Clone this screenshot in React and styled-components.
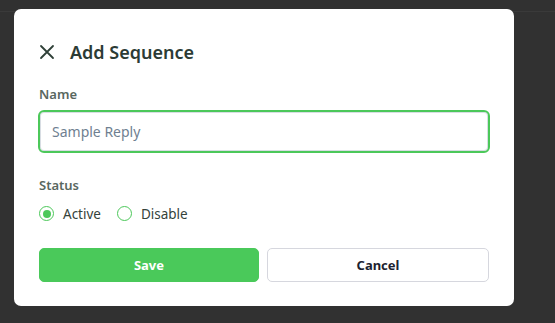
import React, { useState } from 'react'
import styled, { createGlobalStyle } from 'styled-components'

const GlobalStyle = createGlobalStyle`
    html, body {
        margin: 0;
        padding: 0;
        background: #313131;
        font-family: 'Noto Sans', 'Open Sans', sans-serif;
    }
`

export default function App() {
    const [status, setStatus] = useState('active')
    const [name, setName] = useState('')

    return (
        <>
            <GlobalStyle />
            <Overlay>
                <TopLine />
                <Modal>
                    <Header>
                        <CloseBtn aria-label="close">
                            <svg width="16" height="16" viewBox="0 0 16 16" fill="none">
                                <path d="M2 2L14 14M14 2L2 14" stroke="#2f4038" strokeWidth="1.8" strokeLinecap="round" />
                            </svg>
                        </CloseBtn>
                        <Title>Add Sequence</Title>
                    </Header>
                    <Field gap="7px" top="20px">
                        <Label>Name</Label>
                        <Input
                            autoFocus
                            placeholder="Sample Reply"
                            value={name}
                            onChange={e => setName(e.target.value)}
                        />
                    </Field>
                    <Field gap="10px" top="23px">
                        <Label>Status</Label>
                        <RadioRow>
                            <RadioItem onClick={() => setStatus('active')}>
                                <RadioCircle checked={status === 'active'} />
                                <span>Active</span>
                            </RadioItem>
                            <RadioItem onClick={() => setStatus('disable')}>
                                <RadioCircle checked={status === 'disable'} />
                                <span>Disable</span>
                            </RadioItem>
                        </RadioRow>
                    </Field>
                    <Footer>
                        <Button variant="primary">Save</Button>
                        <Button variant="default">Cancel</Button>
                    </Footer>
                </Modal>
            </Overlay>
        </>
    )
}

const Overlay = styled.div`
    position: relative;
    width: 555px;
    height: 323px;
    padding: 9px 0 0 14px;
    box-sizing: border-box;
    background: #313131;
`
const TopLine = styled.div`
    position: absolute;
    left: 0;
    right: 0;
    top: 11px;
    height: 1px;
    background: #3a3a3a;
`
const Modal = styled.div`
    position: relative;
    width: 500px;
    height: 297px;
    box-sizing: border-box;
    background: #fff;
    border-radius: 7px;
    padding: 30px 25px 0 25px;
    display: flex;
    flex-direction: column;
`
const Header = styled.div`
    display: flex;
    align-items: center;
    gap: 15px;
    height: 26px;
`
const CloseBtn = styled.button`
    border: none;
    background: none;
    padding: 0;
    width: 16px;
    height: 16px;
    display: flex;
    cursor: pointer;
`
const Title = styled.h2`
    margin: 0;
    font-size: 18px;
    font-weight: 600;
    color: #2c3b35;
`
const Field = styled.div`
    display: flex;
    flex-direction: column;
    gap: ${p => p.gap || '9px'};
    margin-top: ${p => p.top || '16px'};
`
const Label = styled.label`
    font-size: 13px;
    font-weight: 600;
    color: #59675f;
    line-height: 18px;
`
const Input = styled.input`
    width: 452px;
    height: 43px;
    flex: 0 0 43px;
    box-sizing: border-box;
    margin-left: -1px;
    border: 2px solid #4cc85a;
    border-radius: 6px;
    padding: 0 12px;
    font-family: 'Noto Sans', 'Open Sans', sans-serif;
    font-size: 14px;
    color: #222;
    outline: none;
    box-shadow: inset 0 0 0 1px #d8dde3;
    &::placeholder {
        color: #6f7f91;
    }
`
const RadioRow = styled.div`
    display: flex;
    align-items: center;
    gap: 16px;
    height: 19px;
`
const RadioItem = styled.div`
    display: flex;
    align-items: center;
    gap: 9px;
    cursor: pointer;
    span {
        font-size: 13.5px;
        color: #34423b;
    }
`
const RadioCircle = styled.span`
    width: 15px;
    height: 15px;
    box-sizing: border-box;
    border-radius: 50%;
    border: 1.5px solid #4cc85a;
    display: flex;
    align-items: center;
    justify-content: center;
    &::after {
        content: '';
        width: 8px;
        height: 8px;
        border-radius: 50%;
        background: #4cc85a;
        display: ${p => (p.checked ? 'block' : 'none')};
    }
`
const Footer = styled.div`
    display: grid;
    grid-template-columns: 220px 222px;
    gap: 8px;
    margin-top: 25px;
`
const Button = styled.button`
    height: 34px;
    border-radius: 5px;
    font-family: 'Noto Sans', 'Open Sans', sans-serif;
    font-size: 13px;
    font-weight: 700;
    cursor: pointer;
    background: ${p => (p.variant === 'primary' ? '#4ac95a' : '#fff')};
    color: ${p => (p.variant === 'primary' ? '#fff' : '#1c2230')};
    border: 1px solid ${p => (p.variant === 'primary' ? '#4ac95a' : '#d6d7de')};
`
